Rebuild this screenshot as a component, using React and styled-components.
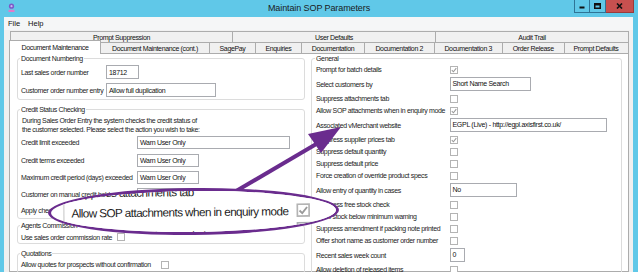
import React from 'react';
import styled, { createGlobalStyle } from 'styled-components';

const FONT = `"Liberation Sans", Arial, sans-serif`;
const PURPLE = '#6a2c8e';

const Global = createGlobalStyle`
  html, body { margin: 0; padding: 0; }
  body { background: #60c8e8; font-family: ${FONT}; overflow: hidden; }
  #root { width: 638px; height: 272px; }
`;

const Window = styled.div`
  position: relative;
  width: 638px;
  height: 272px;
  overflow: hidden;
  background: #60c8e8;
  display: flex;
  flex-direction: column;
`;

const TitleBar = styled.div`
  flex: none;
  height: 17px;
  display: grid;
  grid-template-columns: 1fr auto 1fr;
  align-items: start;
`;

const AppIcon = styled.svg`
  display: block;
  margin: 3px 0 0 8px;
`;

const TitleText = styled.div`
  font-size: 9px;
  letter-spacing: -0.1px;
  line-height: 17px;
  color: #1b1b1b;
  white-space: nowrap;
`;

const WinButtons = styled.div`
  justify-self: end;
  display: flex;
  margin-right: 4px;
`;

const WinBtn = styled.div`
  box-sizing: border-box;
  width: ${(p) => p.$w}px;
  height: 13px;
  border: 1px solid ${(p) => (p.$close ? '#9a3b3b' : '#2f7496')};
  border-top: none;
  background: ${(p) => (p.$close ? '#c7504f' : '#60c8e8')};
  display: flex;
  align-items: center;
  justify-content: center;
  & + & { border-left: none; }
`;

const Client = styled.div`
  flex: 1;
  min-height: 0;
  margin: 0 5px 0 4px;
  background: #f0f0f0;
  display: flex;
  flex-direction: column;
`;

const MenuBar = styled.div`
  flex: none;
  height: 13px;
  background: #f5f6f7;
  display: flex;
  align-items: center;
  gap: 8px;
  padding-left: 4px;
  font-size: 7.5px;
  color: #111;
`;

const TabRow = styled.div`
  flex: none;
  display: flex;
  height: ${(p) => p.$h}px;
  margin-top: ${(p) => p.$mt || 0}px;
  padding-left: ${(p) => p.$pl}px;
`;

const Tab = styled.div`
  box-sizing: border-box;
  flex: none;
  width: ${(p) => p.$w}px;
  border: 1px solid #acacac;
  border-bottom: ${(p) => (p.$back ? '1px solid #acacac' : 'none')};
  background: ${(p) => (p.$active ? '#ffffff' : '#f0f0f0')};
  font-size: 7px;
  letter-spacing: -0.35px;
  color: #111;
  display: flex;
  align-items: center;
  justify-content: center;
  white-space: nowrap;
  & + & { margin-left: -1px; }
  ${(p) =>
    p.$active &&
    `
    position: relative;
    z-index: 1;
    margin-top: -2px;
    margin-bottom: -1px;
    padding-bottom: 1px;
  `}
`;

const TabPage = styled.div`
  flex: 1;
  min-height: 0;
  margin: 0 4px 0 5px;
  border: 1px solid #acacac;
  background: #ffffff;
  padding: 0 6px 0 7px;
  display: grid;
  grid-template-columns: 288px 311px;
  column-gap: 6px;
  align-items: start;
`;

const Column = styled.div`
  display: flex;
  flex-direction: column;
`;

const Group = styled.fieldset`
  margin: ${(p) => p.$mt || 0}px 0 0;
  padding: ${(p) => p.$pad};
  border: 1px solid #dcdcdc;
  border-radius: 3px;
  min-width: 0;
`;

const Legend = styled.legend`
  padding: 0 1px;
  margin-left: -1px;
  font-size: 7px;
  line-height: 9px;
  letter-spacing: -0.35px;
  color: #222;
`;

const Rows = styled.div`
  display: flex;
  flex-direction: column;
  gap: ${(p) => p.$gap || 0}px;
`;

const FormRow = styled.div`
  display: grid;
  grid-template-columns: ${(p) => p.$lw}px auto;
  align-items: center;
  height: ${(p) => p.$h}px;
`;

const Label = styled.span`
  font-size: 7px;
  letter-spacing: -0.35px;
  color: #1c1c1c;
  white-space: nowrap;
`;

const Desc = styled.div`
  font-size: 7px;
  line-height: 9px;
  letter-spacing: -0.35px;
  color: #1c1c1c;
  padding-left: 1px;
  white-space: nowrap;
`;

const TextBox = styled.div`
  box-sizing: border-box;
  width: ${(p) => p.$w}px;
  height: ${(p) => p.$h || 14}px;
  border: 1px solid #a9abb0;
  background: #fff;
  padding-left: 2px;
  font-size: 7px;
  letter-spacing: -0.3px;
  color: #111;
  display: flex;
  align-items: center;
  white-space: nowrap;
  overflow: hidden;
`;

const CheckBox = styled.div`
  box-sizing: border-box;
  width: 8px;
  height: 8px;
  border: 1px solid #b4b4b4;
  background: #fff;
  display: flex;
  align-items: center;
  justify-content: center;
`;

const Callout = styled.div`
  position: absolute;
  z-index: 3;
  left: 48px;
  top: 188px;
  width: 291px;
  height: 47px;
  box-sizing: border-box;
  border: 3px solid ${PURPLE};
  border-radius: 50%;
  background: #ffffff;
  overflow: hidden;
  transform: rotate(-0.6deg);
`;

const MagPane = styled.div`
  position: absolute;
  left: 11.6px;
  top: -9.7px;
  width: 320px;
  transform: scale(1.68);
  transform-origin: 0 0;
  border-left: 1px solid #dcdcdc;
  padding-left: 4px;
  background: #fff;
`;

const Overlay = styled.svg`
  position: absolute;
  z-index: 2;
  left: 0;
  top: 0;
  pointer-events: none;
`;

const Check = ({ on }) => (
  <CheckBox>
    {on && (
      <svg width="6" height="6" viewBox="0 0 6 6">
        <path d="M0.8 3.2 L2.4 4.8 L5.3 1.2" fill="none" stroke="#9a9a9a" strokeWidth="1.1" />
      </svg>
    )}
  </CheckBox>
);

const Field = ({ row }) =>
  row.text !== undefined ? <TextBox $w={row.w}>{row.text}</TextBox> : <Check on={row.check} />;

const GeneralRow = ({ row }) => (
  <FormRow $lw={133.5} $h={row.text !== undefined ? 17 : 12}>
    <Label>{row.label}</Label>
    {row.text !== undefined ? (
      <TextBox $w={row.w} style={{ marginTop: '-1px' }}>{row.text}</TextBox>
    ) : (
      <Check on={row.check} />
    )}
  </FormRow>
);

const generalRows = [
  { label: 'Prompt for batch details', check: true },
  { label: 'Select customers by', text: 'Short Name Search', w: 81 },
  { label: 'Suppress attachments tab', check: false },
  { label: 'Allow SOP attachments when in enquiry mode', check: true },
  { label: 'Associated vMerchant website', text: 'EGPL (Live) - http://egpl.axisfirst.co.uk/', w: 157 },
  { label: 'Suppress supplier prices tab', check: true },
  { label: 'Suppress default quantity', check: false },
  { label: 'Suppress default price', check: false },
  { label: 'Force creation of override product specs', check: false },
  { label: 'Allow entry of quantity in cases', text: 'No', w: 67 },
  { label: 'Suppress free stock check', check: false },
  { label: 'Allow stock below minimum warning', check: false },
  { label: 'Suppress amendment if packing note printed', check: false },
  { label: 'Offer short name as customer order number', check: false },
  { label: 'Recent sales week count', text: '0', w: 15 },
  { label: 'Allow deletion of released items', check: false },
];

const creditRows = [
  { label: 'Credit limit exceeded', text: 'Warn User Only', w: 153, h: 17.4 },
  { label: 'Credit terms exceeded', text: 'Warn User Only', w: 62, h: 17.4 },
  { label: 'Maximum credit period (days) exceeded', text: 'Warn User Only', w: 62, h: 17.4 },
  { label: 'Customer on manual credit hold', text: 'Warn User Only', w: 62, h: 17.4 },
  { label: 'Apply check to all orders', check: false, h: 14 },
];

const backTabs = [
  { label: 'Prompt Suppression', w: 223 },
  { label: 'User Defaults', w: 204 },
  { label: 'Audit Trail', w: 194 },
];

const frontTabs = [
  { label: 'Document Maintenance', w: 92, active: true },
  { label: 'Document Maintenance (cont.)', w: 110 },
  { label: 'SagePay', w: 47 },
  { label: 'Enquiries', w: 47 },
  { label: 'Documentation', w: 64 },
  { label: 'Documentation 2', w: 70.5 },
  { label: 'Documentation 3', w: 69.5 },
  { label: 'Order Release', w: 62.5 },
  { label: 'Prompt Defaults', w: 65 },
];

export default function App() {
  return (
    <>
      <Global />
      <Window>
        <TitleBar>
          <AppIcon width="7" height="10" viewBox="0 0 7 10">
            <circle cx="3.5" cy="3.2" r="2.6" fill="#7d58c8" />
            <circle cx="3.5" cy="3.2" r="1.1" fill="#c9b8f0" />
            <rect x="0.5" y="6.8" width="6" height="2.2" fill="#e37ac9" />
          </AppIcon>
          <TitleText>Maintain SOP Parameters</TitleText>
          <WinButtons>
            <WinBtn $w={16}>
              <svg width="6" height="6" viewBox="0 0 6 6">
                <rect x="0.5" y="3.5" width="5" height="2" fill="#111" />
              </svg>
            </WinBtn>
            <WinBtn $w={16}>
              <svg width="7" height="6" viewBox="0 0 7 6">
                <rect x="0.75" y="0.75" width="5.5" height="4.5" fill="none" stroke="#111" strokeWidth="1.5" />
                <rect x="0.5" y="0.5" width="6" height="2" fill="#111" />
              </svg>
            </WinBtn>
            <WinBtn $w={28} $close>
              <svg width="7" height="6" viewBox="0 0 7 6">
                <path d="M1 0.5 L6 5.5 M6 0.5 L1 5.5" stroke="#111" strokeWidth="1.6" />
              </svg>
            </WinBtn>
          </WinButtons>
        </TitleBar>

        <Client>
          <MenuBar>
            <span>File</span>
            <span>Help</span>
          </MenuBar>

          <TabRow $h={12} $mt={1} $pl={6}>
            {backTabs.map((t) => (
              <Tab key={t.label} $w={t.w} $back>
                {t.label}
              </Tab>
            ))}
          </TabRow>
          <TabRow $h={11} $mt={-1} $pl={5}>
            {frontTabs.map((t) => (
              <Tab key={t.label} $w={t.w} $active={t.active}>
                {t.label}
              </Tab>
            ))}
          </TabRow>

          <TabPage>
            <Column>
              <Group $pad="2px 3px 2px 3px">
                <Legend>Document Numbering</Legend>
                <Rows $gap={4}>
                  <FormRow $lw={85} $h={14}>
                    <Label>Last sales order number</Label>
                    <TextBox $w={33}>18712</TextBox>
                  </FormRow>
                  <FormRow $lw={85} $h={14}>
                    <Label>Customer order number entry</Label>
                    <TextBox $w={110}>Allow full duplication</TextBox>
                  </FormRow>
                </Rows>
              </Group>

              <Group $mt={4.5} $pad="2.5px 3px 0 3px">
                <Legend>Credit Status Checking</Legend>
                <Desc>During Sales Order Entry the system checks the credit status of</Desc>
                <Desc>the customer selected. Please select the action you wish to take:</Desc>
                <Rows>
                  {creditRows.map((r) => (
                    <FormRow key={r.label} $lw={116} $h={r.h}>
                      <Label>{r.label}</Label>
                      {r.text !== undefined ? <TextBox $w={r.w} $h={13}>{r.text}</TextBox> : <Field row={r} />}
                    </FormRow>
                  ))}
                </Rows>
              </Group>

              <Group $mt={2} $pad="1.5px 3px 0 3px">
                <Legend>Agents Commission</Legend>
                <FormRow $lw={96} $h={12}>
                  <Label>Use sales order commission rate</Label>
                  <Check on={false} />
                </FormRow>
              </Group>

              <Group $mt={4.5} $pad="1px 3px 2px 3px">
                <Legend>Quotations</Legend>
                <FormRow $lw={140} $h={12}>
                  <Label>Allow quotes for prospects without confirmation</Label>
                  <Check on={false} />
                </FormRow>
              </Group>
            </Column>

            <Column>
              <Group $pad="0.5px 4px 4px 4px">
                <Legend>General</Legend>
                <Rows>
                  {generalRows.map((r) => (
                    <GeneralRow key={r.label} row={r} />
                  ))}
                </Rows>
              </Group>
            </Column>
          </TabPage>
        </Client>

        <Overlay width="638" height="272" viewBox="0 0 638 272">
          <line x1="226" y1="197" x2="318" y2="143" stroke={PURPLE} strokeWidth="4" />
          <polygon points="341,127 308,134 321,153" fill={PURPLE} />
        </Overlay>

        <Callout>
          <MagPane>
            <Rows>
              {generalRows.slice(2, 5).map((r) => (
                <GeneralRow key={r.label} row={r} />
              ))}
            </Rows>
          </MagPane>
        </Callout>
      </Window>
    </>
  );
}
